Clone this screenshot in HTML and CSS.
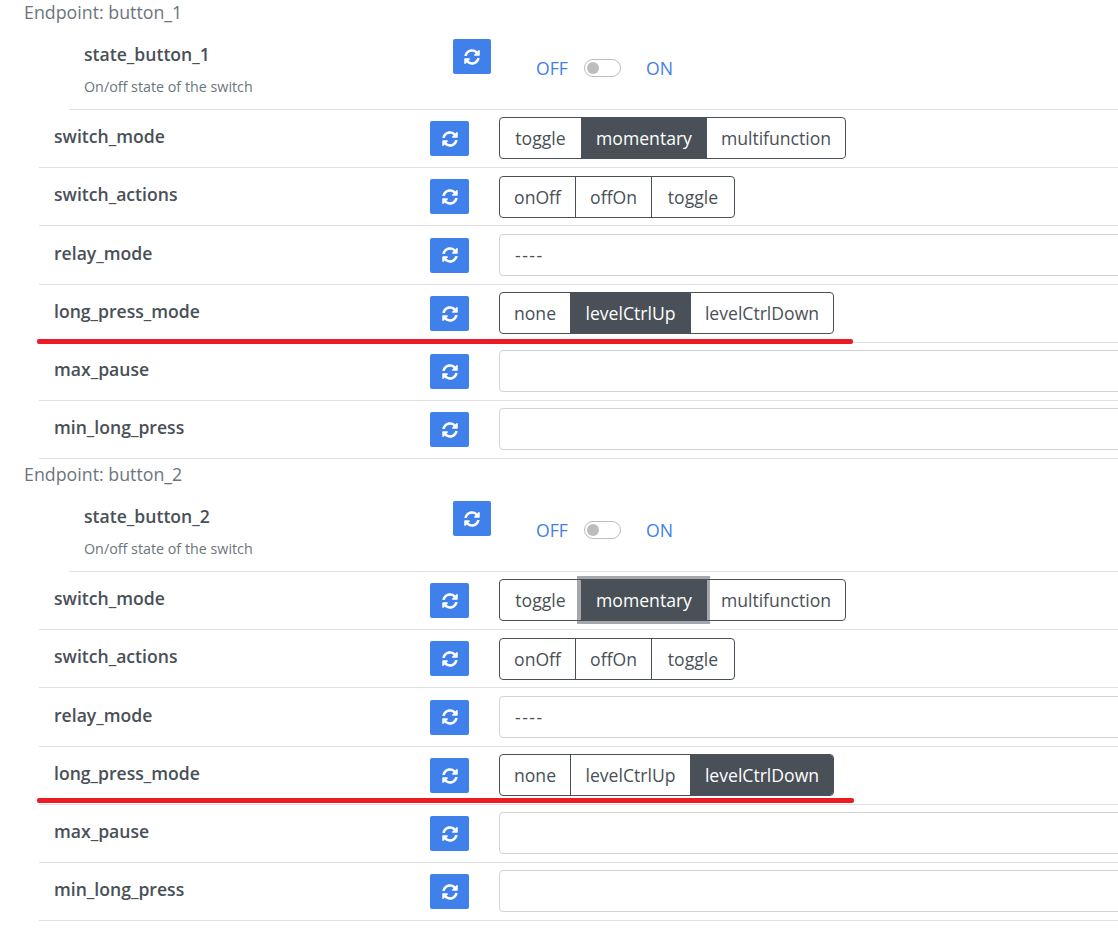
FILE: index.html
```html
<!DOCTYPE html>
<html lang="en">
<head>
<meta charset="utf-8">
<title>Endpoints</title>
<link rel="stylesheet" href="styles.css">
</head>
<body>
<svg class="defs" width="0" height="0" aria-hidden="true"><defs><symbol id="sync" viewBox="0 0 512 512"><path fill="currentColor" d="M370.72 133.28C339.458 104.008 298.888 87.962 255.848 88c-77.458.068-144.328 53.178-162.791 126.85-1.344 5.363-6.122 9.15-11.651 9.15H24.103c-7.498 0-13.194-6.807-11.807-14.176C33.933 94.924 134.813 8 256 8c66.448 0 126.791 26.136 171.315 68.685L463.03 40.97C478.149 25.851 504 36.559 504 57.941V192c0 13.255-10.745 24-24 24H345.941c-21.382 0-32.09-25.851-16.971-40.971l41.75-41.749zM32 296h134.059c21.382 0 32.09 25.851 16.971 40.971l-41.75 41.75c31.262 29.273 71.835 45.319 114.876 45.28 77.418-.07 144.315-53.144 162.787-126.849 1.344-5.363 6.122-9.15 11.651-9.15h57.304c7.498 0 13.194 6.807 11.807 14.176C478.067 417.076 377.187 504 256 504c-66.448 0-126.791-26.136-171.315-68.685L48.97 471.03C33.851 486.149 8 475.441 8 454.059V320c0-13.255 10.745-24 24-24z"/></symbol></defs></svg>
<main class="page">
  <section class="endpoint">
    <div class="ep-title">Endpoint: button_1</div>
    <div class="state-row">
      <div class="state-info"><div class="name">state_button_1</div><div class="desc">On/off state of the switch</div></div>
      <button class="refresh refresh-state"><svg class="ico"><use href="#sync"/></svg></button>
      <div class="toggle"><span class="tg-label">OFF</span><span class="track"><span class="knob"></span></span><span class="tg-label tg-on">ON</span></div>
    </div>
    <div class="row">
      <div class="name col-name">switch_mode</div>
      <button class="refresh"><svg class="ico"><use href="#sync"/></svg></button>
      <div class="group group-mode"><span class="opt">toggle</span><span class="opt active">momentary</span><span class="opt">multifunction</span></div>
    </div>
    <div class="row">
      <div class="name col-name">switch_actions</div>
      <button class="refresh"><svg class="ico"><use href="#sync"/></svg></button>
      <div class="group group-actions"><span class="opt">onOff</span><span class="opt">offOn</span><span class="opt">toggle</span></div>
    </div>
    <div class="row row-tall">
      <div class="name col-name">relay_mode</div>
      <button class="refresh"><svg class="ico"><use href="#sync"/></svg></button>
      <div class="field">----</div>
    </div>
    <div class="row">
      <div class="name col-name">long_press_mode</div>
      <button class="refresh"><svg class="ico"><use href="#sync"/></svg></button>
      <div class="group group-long"><span class="opt">none</span><span class="opt active">levelCtrlUp</span><span class="opt">levelCtrlDown</span></div>
      <span class="mark"></span>
    </div>
    <div class="row">
      <div class="name col-name">max_pause</div>
      <button class="refresh"><svg class="ico"><use href="#sync"/></svg></button>
      <div class="field"></div>
    </div>
    <div class="row">
      <div class="name col-name">min_long_press</div>
      <button class="refresh"><svg class="ico"><use href="#sync"/></svg></button>
      <div class="field"></div>
    </div>
  </section>
  <section class="endpoint">
    <div class="ep-title">Endpoint: button_2</div>
    <div class="state-row">
      <div class="state-info"><div class="name">state_button_2</div><div class="desc">On/off state of the switch</div></div>
      <button class="refresh refresh-state"><svg class="ico"><use href="#sync"/></svg></button>
      <div class="toggle"><span class="tg-label">OFF</span><span class="track"><span class="knob"></span></span><span class="tg-label tg-on">ON</span></div>
    </div>
    <div class="row">
      <div class="name col-name">switch_mode</div>
      <button class="refresh"><svg class="ico"><use href="#sync"/></svg></button>
      <div class="group group-mode"><span class="opt">toggle</span><span class="opt active focus">momentary</span><span class="opt">multifunction</span></div>
    </div>
    <div class="row">
      <div class="name col-name">switch_actions</div>
      <button class="refresh"><svg class="ico"><use href="#sync"/></svg></button>
      <div class="group group-actions"><span class="opt">onOff</span><span class="opt">offOn</span><span class="opt">toggle</span></div>
    </div>
    <div class="row row-tall">
      <div class="name col-name">relay_mode</div>
      <button class="refresh"><svg class="ico"><use href="#sync"/></svg></button>
      <div class="field">----</div>
    </div>
    <div class="row">
      <div class="name col-name">long_press_mode</div>
      <button class="refresh"><svg class="ico"><use href="#sync"/></svg></button>
      <div class="group group-long"><span class="opt">none</span><span class="opt">levelCtrlUp</span><span class="opt active">levelCtrlDown</span></div>
      <span class="mark mark-high"></span>
    </div>
    <div class="row">
      <div class="name col-name">max_pause</div>
      <button class="refresh"><svg class="ico"><use href="#sync"/></svg></button>
      <div class="field"></div>
    </div>
    <div class="row">
      <div class="name col-name">min_long_press</div>
      <button class="refresh"><svg class="ico"><use href="#sync"/></svg></button>
      <div class="field"></div>
    </div>
  </section>
</main>
</body>
</html>
```
FILE: styles.css
```css
* { box-sizing: border-box; }
html, body { margin: 0; height: 100%; overflow: hidden; background: #fff; }
body { font-family: "Open Sans", "Noto Sans", "Liberation Sans", sans-serif; color: #495057; font-size: 17.6px; }
.defs { position: absolute; }
.page { width: 1118px; padding-left: 24px; overflow: hidden; }
.endpoint { height: 462px; }
.ep-title { height: 25px; line-height: 25px; color: #6c757d; font-size: 17.8px; }
.state-row {
  display: flex; align-items: flex-start; height: 85px; margin-left: 45px; padding: 14px 0 0 15px;
  border-bottom: 1px solid #dee2e6;
}
.state-info { flex: none; width: 369px; }
.name { font-weight: 600; font-size: 17.6px; line-height: 30px; }
.desc { font-size: 14.3px; line-height: 20px; margin-top: 8px; color: #6c757d; }
.row {
  position: relative; display: flex; align-items: center; height: 58px; margin-left: 15px; padding-left: 15px;
  border-bottom: 1px solid #dee2e6;
}
.row-tall { height: 59px; }
.col-name { flex: none; width: 376px; margin-top: -5px; }
.refresh {
  display: flex; align-items: center; justify-content: center; flex: none; width: 39px; height: 35px; padding: 0;
  border: 0; border-radius: 2px; background: #3f80ea; color: #fff;
}
.refresh-state { width: 38px; }
.ico { width: 16px; height: 16px; }
.group { display: grid; height: 42px; margin-left: 30px; border: 1px solid #495057; border-radius: 4px; }
.group-mode { grid-template-columns: 81px 125px 139px; margin-bottom: 1px; }
.group-actions { grid-template-columns: 75px 76px 83px; }
.group-long { grid-template-columns: 70px 120px 143px; margin-bottom: 1px; }
.opt { display: flex; align-items: center; justify-content: center; padding-top: 2px; border-left: 1px solid #495057; line-height: 1; }
.opt:first-child { border-left: 0; border-radius: 3px 0 0 3px; }
.opt:last-child { border-radius: 0 3px 3px 0; }
.opt.active { background: #495057; color: #fff; }
.opt.focus { position: relative; box-shadow: 0 0 0 4px rgba(73, 80, 87, .5); }
.field { flex: none; width: 800px; height: 42px; margin: 0 0 1px 30px; padding: 0 15px; border: 1px solid #ced4da; border-radius: 4px; line-height: 40px; letter-spacing: 1.5px; }
.toggle { display: flex; align-items: center; margin: 17px 0 0 45px; line-height: 24px; color: #3f80ea; }
.tg-label { width: 32px; }
.tg-on { margin-left: 25px; }
.track { display: block; width: 37px; height: 18px; margin-left: 16px; padding: 2px 2px; border: 1px solid #bdbdbd; border-radius: 9px; }
.knob { display: block; width: 12px; height: 12px; border-radius: 50%; background: #bdbdbd; }
.mark { position: absolute; left: -2px; bottom: -2px; width: 816px; height: 5px; border-radius: 2px; background: #ed1c24; }
.mark-high { bottom: 1px; width: 817px; }
```
